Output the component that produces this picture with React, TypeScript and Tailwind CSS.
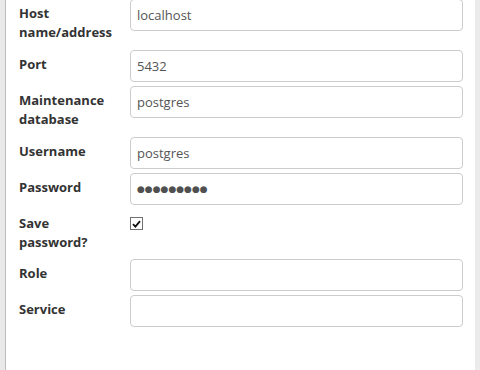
import React from "react";

const font = { fontFamily: '"Open Sans", "Noto Sans", Arial, sans-serif' };

function Label({ children, pb = "pb-[5px]" }: { children: React.ReactNode; pb?: string }) {
  return (
    <div
      className={
        "w-[96px] shrink-0 pt-[5px] text-[13px] font-bold leading-[18.5px] text-[#333333] " + pb
      }
    >
      {children}
    </div>
  );
}

function TextInput({ value }: { value: string }) {
  return (
    <input
      type="text"
      readOnly
      value={value}
      className="h-[32px] w-[333px] shrink-0 rounded-[4px] border border-[#cccccc] bg-white px-[6px] text-[13px] text-[#555555] outline-none"
      style={font}
    />
  );
}

function Row({
  label,
  children,
  pb,
}: {
  label: React.ReactNode;
  children: React.ReactNode;
  pb?: string;
}) {
  return (
    <div className="flex items-start gap-[15px]">
      <Label pb={pb}>{label}</Label>
      {children}
    </div>
  );
}

export default function App() {
  return (
    <div className="flex h-[370px] w-[480px] overflow-hidden bg-white" style={font}>
      <div className="w-[5px] shrink-0 bg-[#e9e9e9]" />
      <div className="w-px shrink-0 bg-[#bdbdbd]" />
      <div className="-mt-px flex flex-1 flex-col gap-[4px] pl-[13px] pr-[12px]">
        <Row label="Host name/address">
          <TextInput value="localhost" />
        </Row>
        <Row label="Port">
          <TextInput value="5432" />
        </Row>
        <Row label="Maintenance database">
          <TextInput value="postgres" />
        </Row>
        <Row label="Username">
          <TextInput value="postgres" />
        </Row>
        <Row label="Password">
          <div className="flex h-[32px] w-[333px] shrink-0 items-center rounded-[4px] border border-[#cccccc] bg-white px-[6px] pt-[1px]">
            <span
              className="text-[9px] leading-none text-[#505050]"
              style={{ fontFamily: '"DejaVu Sans", sans-serif' }}
            >
              ●●●●●●●●●
            </span>
          </div>
        </Row>
        <Row label="Save password?" pb="pb-[4px]">
          <div className="pt-[8px]">
            <span className="flex h-[13px] w-[13px] items-center justify-center border border-[#707070] bg-white">
              <svg width="9" height="8" viewBox="0 0 9 8">
                <path d="M1 4.2 L3.4 6.6 L8 1.2" fill="none" stroke="#111" strokeWidth="1.8" />
              </svg>
            </span>
          </div>
        </Row>
        <Row label="Role">
          <TextInput value="" />
        </Row>
        <Row label="Service">
          <TextInput value="" />
        </Row>
      </div>
      <div className="w-[5px] shrink-0 bg-[#ebebeb]" />
    </div>
  );
}
